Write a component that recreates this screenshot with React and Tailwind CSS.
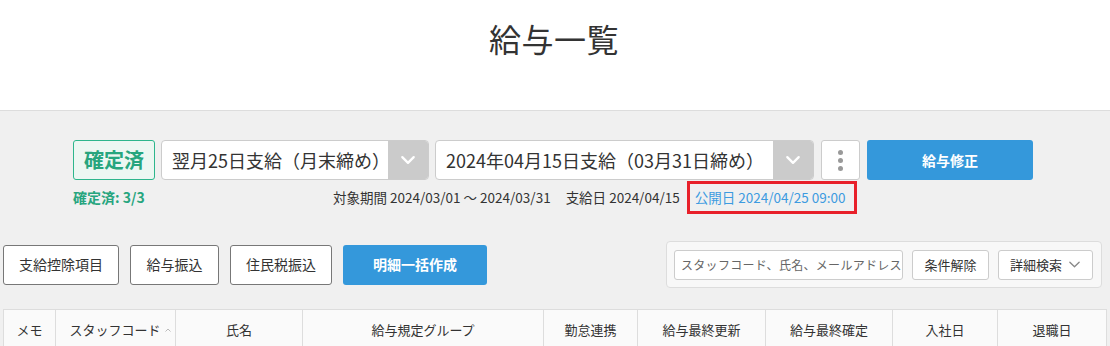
const FONT = { fontFamily: '"Noto Sans CJK JP", "Noto Sans", sans-serif' };

const COLUMNS = [
  { label: "メモ", w: "w-[52px]" },
  { label: "スタッフコード", w: "w-[120px]", sort: true },
  { label: "氏名", w: "w-[127px]" },
  { label: "給与規定グループ", w: "w-[241px]" },
  { label: "勤怠連携", w: "w-[94px]" },
  { label: "給与最終更新", w: "w-[128px]" },
  { label: "給与最終確定", w: "w-[127px]" },
  { label: "入社日", w: "w-[105px]" },
  { label: "退職日", w: "w-[109px]" },
];

function Chevron({ className, size = 14, stroke = 2 }) {
  return (
    <svg width={size} height={size} viewBox="0 0 14 14" fill="none" className={className}>
      <path d="M2 4.5 L7 9.5 L12 4.5" stroke="currentColor" strokeWidth={stroke} strokeLinecap="round" strokeLinejoin="round" />
    </svg>
  );
}

function Select({ label, width }) {
  return (
    <div className={`${width} h-[40px] flex bg-white border border-[#ccc] rounded-[4px] overflow-hidden`}>
      <div className="flex-1 flex items-center pl-[10px] text-[18px] text-[#333]">{label}</div>
      <div className="w-[40px] bg-[#cbcbcb] flex items-center justify-center text-white">
        <Chevron size={16} stroke={2} />
      </div>
    </div>
  );
}

export default function App() {
  return (
    <div className="w-[1110px] h-[346px] overflow-hidden bg-[#f0f0f0]" style={FONT}>
      <header className="h-[111px] bg-white border-b border-[#ddd] flex justify-center">
        <h1 className="pt-[14px] pr-[2px] text-[32px] leading-[48px] text-[#333] font-normal tracking-[0.5px]">給与一覧</h1>
      </header>

      <div className="pt-[29px]">
        <div className="flex pl-[73px]">
          <div className="w-[82px] h-[40px] flex items-center justify-center border border-[#2db68c] bg-[#ecf7f2] rounded-[3px] text-[20px] font-bold text-[#27a57e]">
            確定済
          </div>
          <div className="ml-[6px]"><Select label="翌月25日支給（月末締め）" width="w-[268px]" /></div>
          <div className="ml-[6px]"><Select label="2024年04月15日支給（03月31日締め）" width="w-[379px]" /></div>
          <button className="ml-[7px] w-[39px] h-[40px] bg-white border border-[#ccc] rounded-[3px] flex flex-col items-center justify-center gap-[3px]">
            <span className="w-[5px] h-[5px] rounded-full bg-[#999]" />
            <span className="w-[5px] h-[5px] rounded-full bg-[#999]" />
            <span className="w-[5px] h-[5px] rounded-full bg-[#999]" />
          </button>
          <button className="ml-[7px] w-[166px] h-[40px] bg-[#3498db] rounded-[3px] text-white text-[14px] font-bold">
            給与修正
          </button>
        </div>

        <div className="mt-[1px] h-[33px] flex items-center pl-[73px] text-[13.5px] text-[#333]">
          <span className="w-[260px] text-[14px] font-bold text-[#27a57e]">確定済: 3/3</span>
          <span>対象期間 2024/03/01 ～ 2024/03/31</span>
          <span className="ml-[15px]">支給日 2024/04/15</span>
          <span className="ml-[7px] h-[33px] flex items-center border-[3px] border-[#e8202a] pl-[5px] pr-[9px] text-[#3d9be0]">
            公開日 2024/04/25 09:00
          </span>
        </div>

        <div className="mt-[27px] flex items-center justify-between pl-[3px] pr-[8px]">
          <div className="flex gap-[11px] text-[14px] text-[#333]">
            <button className="w-[116px] h-[40px] bg-white border border-[#777] rounded-[3px]">支給控除項目</button>
            <button className="w-[89px] h-[40px] bg-white border border-[#777] rounded-[3px]">給与振込</button>
            <button className="w-[102px] h-[40px] bg-white border border-[#777] rounded-[3px]">住民税振込</button>
            <button className="w-[144px] h-[40px] bg-[#3498db] rounded-[3px] text-white font-bold">明細一括作成</button>
          </div>
          <div className="w-[436px] h-[47px] flex items-center gap-[9px] pl-[7px] pr-[7px] bg-[#f8f8f8] border border-[#ddd] rounded-[4px] text-[13px] text-[#333]">
            <div className="w-[229px] h-[30px] shrink-0 flex items-center pl-[6px] bg-white border border-[#ccc] rounded-[3px] text-[12px] tracking-[0.3px] text-[#666] whitespace-nowrap overflow-hidden">
              スタッフコード、氏名、メールアドレス
            </div>
            <button className="w-[77px] h-[30px] shrink-0 bg-white border border-[#ccc] rounded-[3px]">条件解除</button>
            <button className="w-[95px] h-[30px] shrink-0 flex items-center justify-center gap-[6px] bg-white border border-[#ccc] rounded-[3px]">
              詳細検索
              <Chevron size={13} stroke={1.4} className="text-[#888]" />
            </button>
          </div>
        </div>

        <div className="mt-[21px] ml-[3px] flex border-l border-t border-[#ddd] w-[1104px]">
          {COLUMNS.map(col => (
            <div key={col.label} className={`${col.w} h-[40px] shrink-0 flex items-center justify-center gap-[3px] bg-[#fafafa] border-r border-b border-[#ddd] text-[13px] text-[#333]`}>
              <span className={col.sort ? "ml-[10px]" : ""}>{col.label}</span>
              {col.sort && (
                <svg width="8" height="8" viewBox="0 0 8 8" fill="none" className="text-[#bbb]">
                  <path d="M1.5 5.5 L4 3 L6.5 5.5" stroke="currentColor" strokeWidth="1" />
                </svg>
              )}
            </div>
          ))}
        </div>
      </div>
    </div>
  );
}
